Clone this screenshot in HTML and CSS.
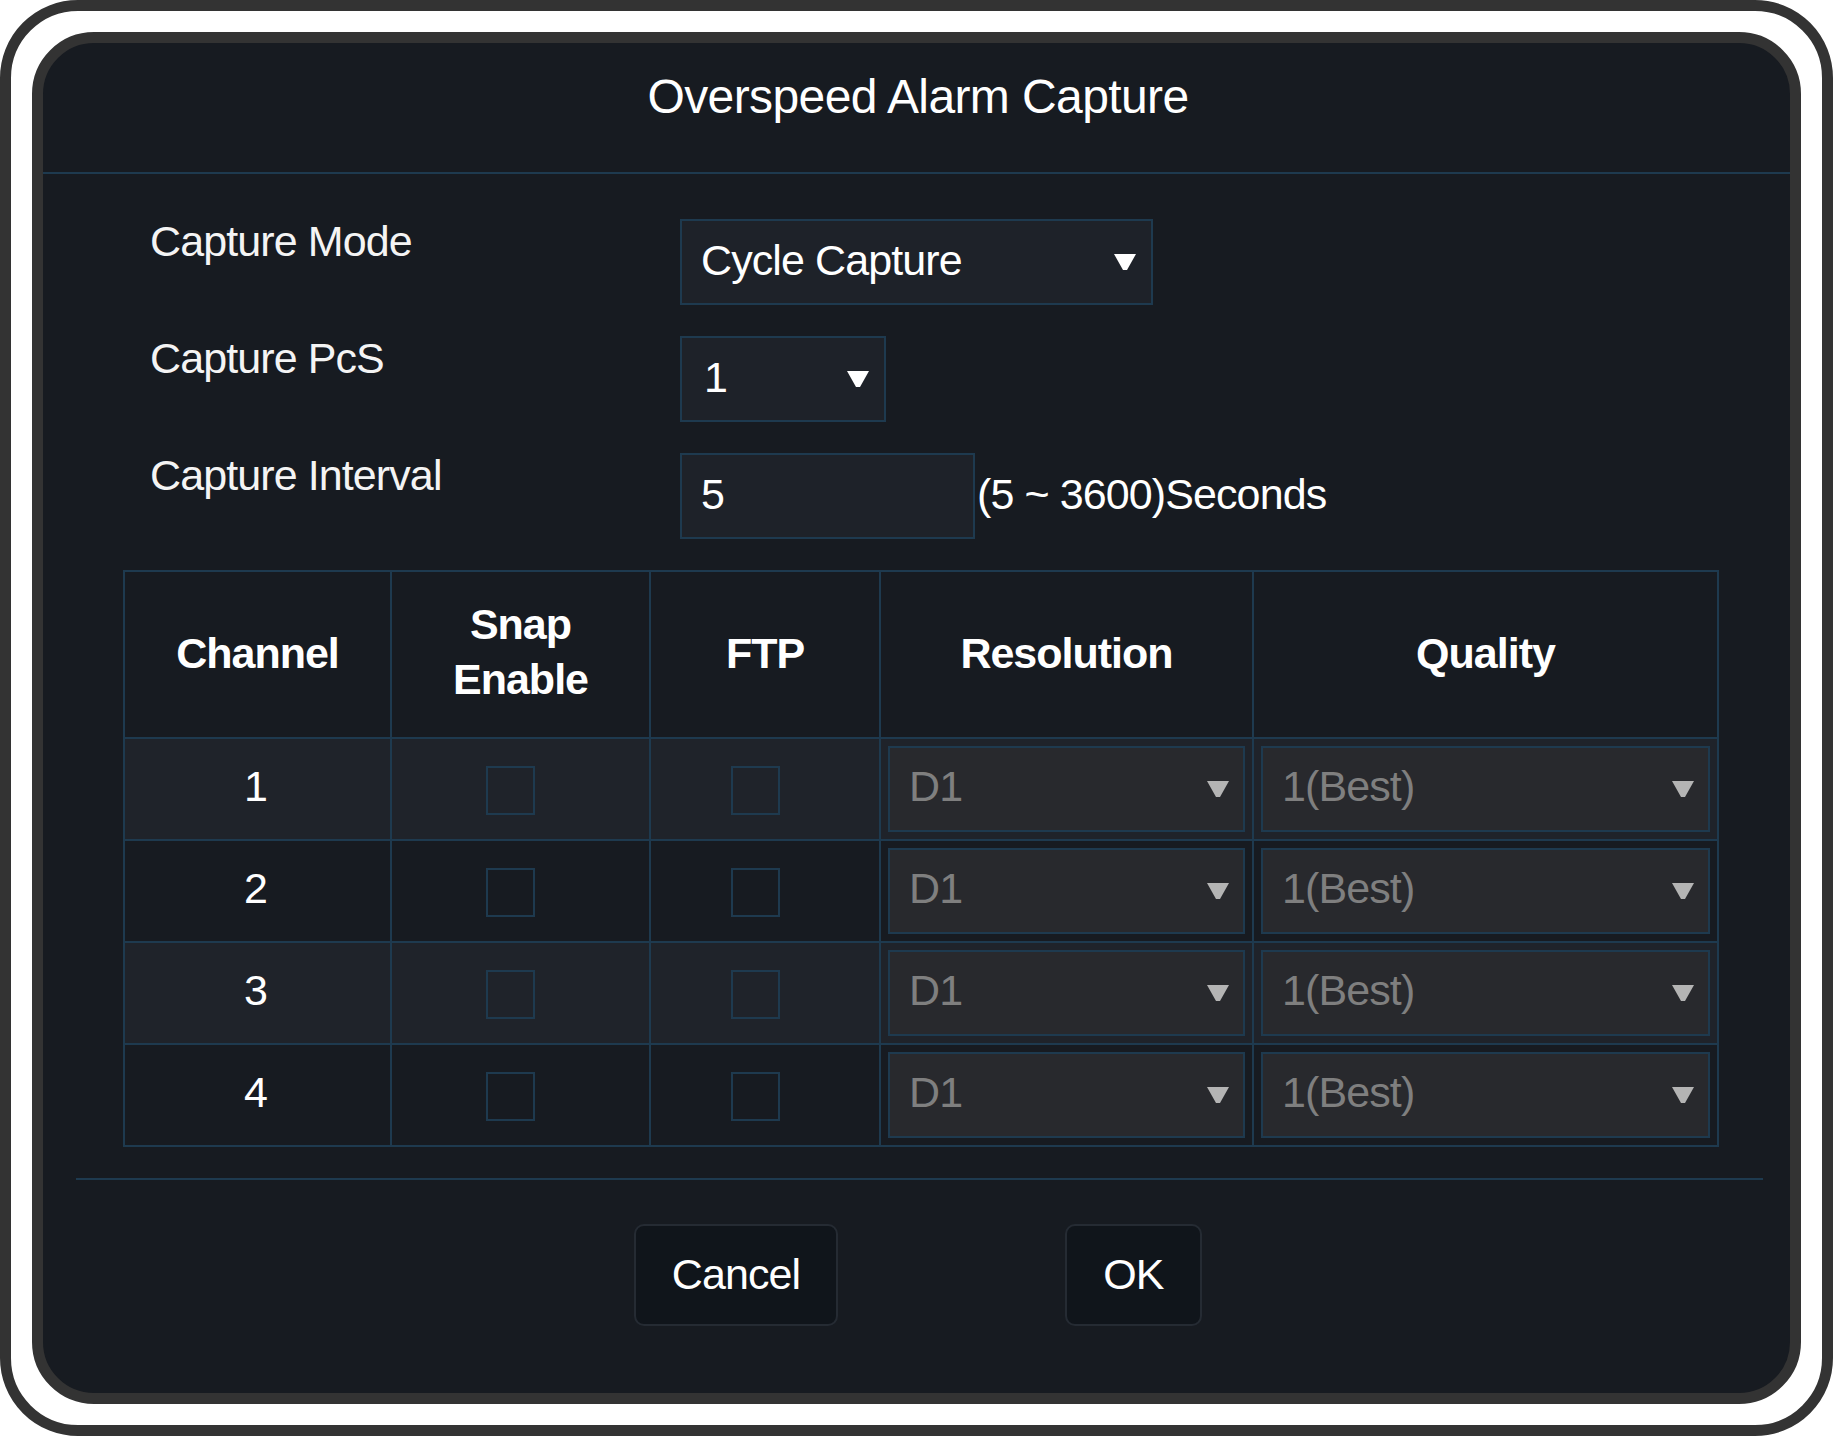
FILE: index.html
```html
<!DOCTYPE html>
<html lang="en">
<head>
<meta charset="utf-8">
<title>Overspeed Alarm Capture</title>
<link rel="stylesheet" href="styles.css">
</head>
<body>
<div class="frame">
  <div class="dialog">
    <div class="header"><span class="title">Overspeed Alarm Capture</span></div>

    <div class="form">
      <div class="row">
        <div class="label">Capture Mode</div>
        <div class="select w-mode"><span>Cycle Capture</span><svg class="arrow" viewBox="0 0 22 16" width="22" height="16"><polygon points="0,0 22,0 13,16 9,16"/></svg></div>
      </div>
      <div class="row">
        <div class="label">Capture PcS</div>
        <div class="select w-pcs"><span>1</span><svg class="arrow" viewBox="0 0 22 16" width="22" height="16"><polygon points="0,0 22,0 13,16 9,16"/></svg></div>
      </div>
      <div class="row">
        <div class="label">Capture Interval</div>
        <div class="select w-input"><span>5</span></div>
        <div class="unit">(5 ~ 3600)Seconds</div>
      </div>
    </div>

    <table class="grid">
      <colgroup>
        <col class="c1"><col class="c2"><col class="c3"><col class="c4"><col class="c5">
      </colgroup>
      <thead>
        <tr>
          <th>Channel</th>
          <th class="two">Snap<br>Enable</th>
          <th>FTP</th>
          <th>Resolution</th>
          <th>Quality</th>
        </tr>
      </thead>
      <tbody>
        <tr class="odd">
          <td class="num">1</td>
          <td><span class="cb"></span></td>
          <td><span class="cb"></span></td>
          <td class="selcell"><div class="tsel"><span>D1</span><svg class="arrow" viewBox="0 0 22 16" width="22" height="16"><polygon points="0,0 22,0 13,16 9,16"/></svg></div></td>
          <td class="selcell"><div class="tsel"><span>1(Best)</span><svg class="arrow" viewBox="0 0 22 16" width="22" height="16"><polygon points="0,0 22,0 13,16 9,16"/></svg></div></td>
        </tr>
        <tr>
          <td class="num">2</td>
          <td><span class="cb"></span></td>
          <td><span class="cb"></span></td>
          <td class="selcell"><div class="tsel"><span>D1</span><svg class="arrow" viewBox="0 0 22 16" width="22" height="16"><polygon points="0,0 22,0 13,16 9,16"/></svg></div></td>
          <td class="selcell"><div class="tsel"><span>1(Best)</span><svg class="arrow" viewBox="0 0 22 16" width="22" height="16"><polygon points="0,0 22,0 13,16 9,16"/></svg></div></td>
        </tr>
        <tr class="odd">
          <td class="num">3</td>
          <td><span class="cb"></span></td>
          <td><span class="cb"></span></td>
          <td class="selcell"><div class="tsel"><span>D1</span><svg class="arrow" viewBox="0 0 22 16" width="22" height="16"><polygon points="0,0 22,0 13,16 9,16"/></svg></div></td>
          <td class="selcell"><div class="tsel"><span>1(Best)</span><svg class="arrow" viewBox="0 0 22 16" width="22" height="16"><polygon points="0,0 22,0 13,16 9,16"/></svg></div></td>
        </tr>
        <tr>
          <td class="num">4</td>
          <td><span class="cb"></span></td>
          <td><span class="cb"></span></td>
          <td class="selcell"><div class="tsel"><span>D1</span><svg class="arrow" viewBox="0 0 22 16" width="22" height="16"><polygon points="0,0 22,0 13,16 9,16"/></svg></div></td>
          <td class="selcell"><div class="tsel"><span>1(Best)</span><svg class="arrow" viewBox="0 0 22 16" width="22" height="16"><polygon points="0,0 22,0 13,16 9,16"/></svg></div></td>
        </tr>
      </tbody>
    </table>

    <div class="divider"></div>

    <div class="buttons">
      <div class="btn cancel">Cancel</div>
      <div class="btn ok">OK</div>
    </div>
  </div>
</div>
</body>
</html>
```

FILE: styles.css
```css
* {
  box-sizing: border-box;
}

html,
body {
  margin: 0;
  background: #ffffff;
}

body {
  width: 1833px;
  height: 1436px;
  overflow: hidden;
  font-family: "Liberation Sans", Arial, Helvetica, sans-serif;
  font-size: 43px;
  letter-spacing: -0.9px;
  color: #ffffff;
}

.frame {
  width: 1833px;
  height: 1436px;
  border: 11px solid #333333;
  border-radius: 78px;
  background: #ffffff;
  padding: 21px;
}

.dialog {
  height: 100%;
  border: 11px solid #333333;
  border-radius: 62px;
  background: #171b21;
  display: flex;
  flex-direction: column;
  overflow: hidden;
}

.header {
  height: 131px;
  flex: none;
  border-bottom: 2px solid #1e3a4f;
  text-align: center;
  padding-top: 26px;
}

.title {
  font-size: 48px;
  line-height: 56px;
  letter-spacing: -0.6px;
  color: #ffffff;
  display: inline-block;
  margin-left: 3px;
}

.form {
  padding: 45px 0 0 107px;
  display: flex;
  flex-direction: column;
  gap: 31px;
}

.row {
  display: flex;
  align-items: flex-start;
  height: 86px;
}

.label {
  width: 530px;
  flex: none;
  line-height: 44px;
  color: #f4f4f4;
}

.select {
  height: 86px;
  flex: none;
  border: 2px solid #1e3a4f;
  background: #1e2229;
  display: flex;
  align-items: center;
  justify-content: space-between;
  padding: 0 15px 4px 19px;
  color: #ffffff;
}

.select .arrow {
  fill: #ffffff;
  margin-top: 4px;
}

.w-mode {
  width: 473px;
}

.w-pcs {
  width: 206px;
  padding-left: 22px;
}

.w-input {
  width: 295px;
}

.unit {
  align-self: center;
  margin-left: 2px;
  padding-bottom: 4px;
  color: #ffffff;
}

.grid {
  margin: 31px 0 0 80px;
  width: 1594px;
  border-collapse: collapse;
  table-layout: fixed;
  flex: none;
}

.c1 { width: 267px; }
.c2 { width: 259px; }
.c3 { width: 230px; }
.c4 { width: 373px; }
.c5 { width: 465px; }

.grid th,
.grid td {
  border: 2px solid #1e3a4f;
  padding: 0;
  text-align: center;
  vertical-align: middle;
}

.grid thead tr {
  height: 167px;
}

.grid th {
  font-weight: bold;
  line-height: 55px;
  letter-spacing: -1px;
  color: #ffffff;
  padding-bottom: 2px;
}

.grid th.two {
  padding-bottom: 6px;
}

.grid tbody tr {
  height: 102px;
}

.grid tbody tr.odd {
  background: #1f232a;
}

.grid td.num {
  padding-bottom: 6px;
  padding-right: 4px;
}

.cb {
  display: inline-block;
  width: 49px;
  height: 49px;
  border: 2px solid #1e3a4f;
  margin-right: 20px;
  vertical-align: middle;
}

.selcell {
  padding: 0;
}

.tsel {
  margin: 0 7px;
  height: 86px;
  border: 2px solid #1e3a4f;
  background: #28292d;
  color: #7f7f7f;
  display: flex;
  align-items: center;
  justify-content: space-between;
  padding: 0 14px 5px 19px;
}

.tsel .arrow {
  fill: #b4b4b4;
  margin-top: 5px;
}

.divider {
  flex: none;
  height: 2px;
  margin: 31px 27px 0 33px;
  background: #1e3a4f;
}

.buttons {
  display: flex;
  gap: 227px;
  padding-left: 591px;
  margin-top: 44px;
}

.btn {
  height: 102px;
  border: 2px solid #252b33;
  border-radius: 10px;
  background: #10151b;
  color: #ffffff;
  display: flex;
  align-items: center;
  justify-content: center;
  padding-bottom: 2px;
}

.cancel {
  width: 204px;
}

.ok {
  width: 137px;
}
```
